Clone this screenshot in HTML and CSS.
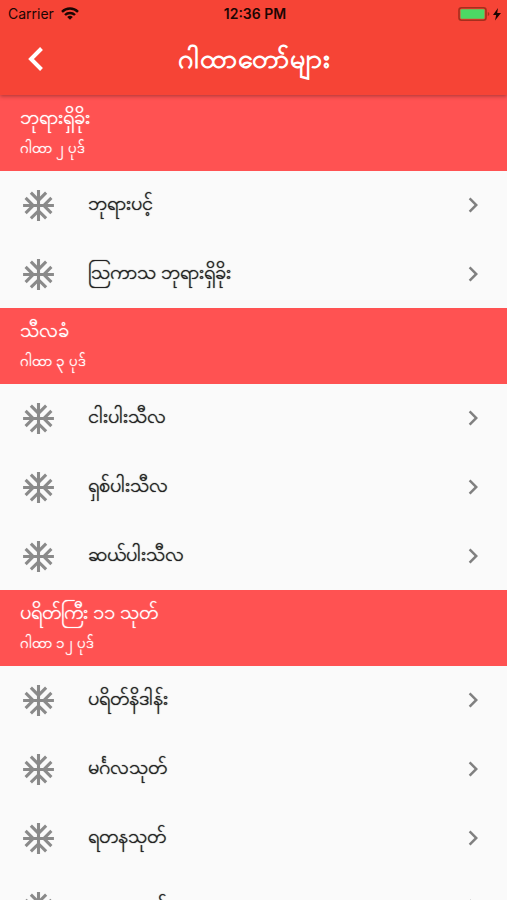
FILE: index.html
```html
<!DOCTYPE html>
<html lang="my">

<head>
    <meta charset="UTF-8">
    <meta name="viewport" content="width=device-width, initial-scale=1.0">
    <title>ဂါထာတော်များ</title>
    <link rel="stylesheet" href="styles.css">
</head>

<body>
    <svg class="defs" width="0" height="0" aria-hidden="true">
        <symbol id="flake" viewBox="0 0 24 24">
            <path d="M22 11h-4.17l3.24-3.24-1.41-1.42L15 11h-2V9l4.66-4.66-1.42-1.41L13 6.17V2h-2v4.17L7.76 2.93 6.34 4.34 11 9v2H9L4.34 6.34 2.93 7.76 6.17 11H2v2h4.17l-3.24 3.24 1.41 1.42L9 13h2v2l-4.66 4.66 1.42 1.41L11 17.83V22h2v-4.17l3.24 3.24 1.42-1.41L13 15v-2h2l4.66 4.66 1.41-1.42L17.83 13H22z" />
        </symbol>
        <symbol id="chevron" viewBox="0 0 24 24">
            <path d="M10 6L8.59 7.41 13.17 12l-4.58 4.59L10 18l6-6z" />
        </symbol>
    </svg>

    <header class="header">
        <div class="status">
            <div class="carrier">
                <span>Carrier</span>
                <svg width="18" height="13" viewBox="0 0 18 13">
                    <g fill="none" stroke="#1b0603" stroke-width="2.4">
                        <path d="M1 4.8a11.3 11.3 0 0 1 16 0" />
                        <path d="M4 8a7.1 7.1 0 0 1 10 0" />
                    </g>
                    <path fill="#1b0603" d="M6.2 10a4 4 0 0 1 5.6 0L9 12.8z" />
                </svg>
            </div>
            <span class="time">12:36 PM</span>
            <div class="battery">
                <svg width="44" height="14" viewBox="0 0 44 14">
                    <rect x="1" y=".8" width="27" height="12.4" rx="2.5" fill="none" stroke="#a52f1d" stroke-width="1.6" />
                    <rect x="2.5" y="2.3" width="24" height="9.4" rx="1" fill="#4cd964" />
                    <path fill="#a52f1d" d="M29.8 5q1.6.5 1.6 2t-1.6 2z" />
                    <path fill="#1b0603" d="M40 1L35 8h3.200l-1.200 5.500 6-7.500h-3.800z" />
                </svg>
            </div>
        </div>
        <div class="bar">
            <button class="back" type="button" aria-label="Back">
                <svg width="16" height="26" viewBox="0 0 16 26">
                    <path fill="none" stroke="#fff" stroke-width="4" d="M13.500 2.500L3 13l10.500 10.500" />
                </svg>
            </button>
            <h1>ဂါထာတော်များ</h1>
        </div>
    </header>

    <main class="content">
        <section>
            <div class="group">
                <h2>ဘုရားရှိခိုး</h2>
                <p>ဂါထာ ၂ ပုဒ်</p>
            </div>
            <ul class="list">
                <li><a href="#"><svg class="flake"><use href="#flake" /></svg><span>ဘုရားပင့်</span><svg class="chevron"><use href="#chevron" /></svg></a></li>
                <li><a href="#"><svg class="flake"><use href="#flake" /></svg><span>ဩကာသ ဘုရားရှိခိုး</span><svg class="chevron"><use href="#chevron" /></svg></a></li>
            </ul>
        </section>
        <section>
            <div class="group">
                <h2>သီလခံ</h2>
                <p>ဂါထာ ၃ ပုဒ်</p>
            </div>
            <ul class="list">
                <li><a href="#"><svg class="flake"><use href="#flake" /></svg><span>ငါးပါးသီလ</span><svg class="chevron"><use href="#chevron" /></svg></a></li>
                <li><a href="#"><svg class="flake"><use href="#flake" /></svg><span>ရှစ်ပါးသီလ</span><svg class="chevron"><use href="#chevron" /></svg></a></li>
                <li><a href="#"><svg class="flake"><use href="#flake" /></svg><span>ဆယ်ပါးသီလ</span><svg class="chevron"><use href="#chevron" /></svg></a></li>
            </ul>
        </section>
        <section>
            <div class="group">
                <h2>ပရိတ်ကြီး ၁၁ သုတ်</h2>
                <p>ဂါထာ ၁၂ ပုဒ်</p>
            </div>
            <ul class="list">
                <li><a href="#"><svg class="flake"><use href="#flake" /></svg><span>ပရိတ်နိဒါန်း</span><svg class="chevron"><use href="#chevron" /></svg></a></li>
                <li><a href="#"><svg class="flake"><use href="#flake" /></svg><span>မင်္ဂလသုတ်</span><svg class="chevron"><use href="#chevron" /></svg></a></li>
                <li><a href="#"><svg class="flake"><use href="#flake" /></svg><span>ရတနသုတ်</span><svg class="chevron"><use href="#chevron" /></svg></a></li>
                <li><a href="#"><svg class="flake"><use href="#flake" /></svg><span>မေတ္တသုတ်</span><svg class="chevron"><use href="#chevron" /></svg></a></li>
            </ul>
        </section>
    </main>
</body>

</html>
```
FILE: styles.css
```css
* {
    margin: 0;
    padding: 0;
    box-sizing: border-box;
}

body {
    height: 100vh;
    display: flex;
    flex-direction: column;
    overflow: hidden;
    background-color: #fafafa;
    color: #212121;
    font-family: "Noto Sans", sans-serif;
}

.defs {
    position: absolute;
}

.header {
    flex: none;
    background-color: #f64436;
    color: white;
    z-index: 1;
    box-shadow: 0 1px 4px rgba(0, 0, 0, 0.35);
}

.status {
    display: grid;
    grid-template-columns: 1fr auto 1fr;
    align-items: center;
    height: 27px;
    padding: 0 5px 0 8px;
    color: #1b0603;
    font-family: Inter, sans-serif;
    font-size: 14px;
}

.carrier {
    display: flex;
    align-items: center;
    gap: 7px;
}

.time {
    font-weight: 600;
}

.battery {
    display: flex;
    justify-content: flex-end;
}

.bar {
    display: grid;
    grid-template-columns: 72px 1fr 72px;
    align-items: center;
    height: 68px;
    padding-bottom: 4px;
}

.back {
    display: flex;
    justify-content: center;
    align-items: center;
    height: 64px;
    background: none;
    border: none;
}

.bar h1 {
    font-size: 27px;
    font-weight: 600;
    line-height: 40px;
    text-align: center;
    padding-bottom: 2px;
}

.content {
    flex: 1;
    min-height: 0;
    overflow-y: auto;
    scrollbar-width: none;
}

.group {
    height: 76px;
    padding: 6px 20px;
    background-color: #ff5252;
    color: white;
    text-shadow: 0 0 1px white;
}

.group h2 {
    font-size: 20px;
    font-weight: 500;
    line-height: 32px;
}

.group p {
    font-size: 15px;
    line-height: 28px;
}

.list {
    display: grid;
    gap: 1px;
    list-style: none;
}

.list a {
    display: flex;
    align-items: center;
    height: 68px;
    padding: 0 19px 0 20px;
    color: inherit;
    font-size: 20px;
    line-height: 36px;
    text-decoration: none;
    text-shadow: 0 0 1px #212121;
}

.list span {
    flex: 1;
    padding: 0 0 4px 31px;
}

.flake {
    width: 37px;
    height: 37px;
    fill: #8a8a8a;
}

.chevron {
    width: 30px;
    height: 30px;
    fill: #808080;
}
```
